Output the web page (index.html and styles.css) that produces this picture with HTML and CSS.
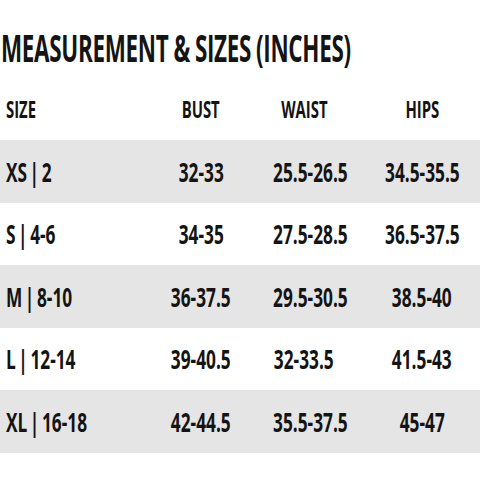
FILE: index.html
```html
<!DOCTYPE html>
<html>
<head>
<meta charset="utf-8">
<link rel="stylesheet" href="styles.css">
</head>
<body>
<div class="chart">
  <h1 class="title"><span class="sq">MEASUREMENT &amp; SIZES (INCHES)</span></h1>
  <div class="row head">
    <div class="cell size"><span class="sq">SIZE</span></div>
    <div class="cell"><span class="sq">BUST</span></div>
    <div class="cell"><span class="sq">WAIST</span></div>
    <div class="cell hips"><span class="sq">HIPS</span></div>
  </div>
  <div class="row shade">
    <div class="cell size"><span class="sq">XS | 2</span></div>
    <div class="cell"><span class="sq">32-33</span></div>
    <div class="cell"><span class="sq">25.5-26.5</span></div>
    <div class="cell hips"><span class="sq">34.5-35.5</span></div>
  </div>
  <div class="row">
    <div class="cell size"><span class="sq">S | 4-6</span></div>
    <div class="cell"><span class="sq">34-35</span></div>
    <div class="cell"><span class="sq">27.5-28.5</span></div>
    <div class="cell hips"><span class="sq">36.5-37.5</span></div>
  </div>
  <div class="row shade">
    <div class="cell size"><span class="sq">M | 8-10</span></div>
    <div class="cell"><span class="sq">36-37.5</span></div>
    <div class="cell"><span class="sq">29.5-30.5</span></div>
    <div class="cell hips"><span class="sq">38.5-40</span></div>
  </div>
  <div class="row">
    <div class="cell size"><span class="sq">L | 12-14</span></div>
    <div class="cell"><span class="sq">39-40.5</span></div>
    <div class="cell"><span class="sq">32-33.5</span></div>
    <div class="cell hips"><span class="sq">41.5-43</span></div>
  </div>
  <div class="row shade">
    <div class="cell size"><span class="sq">XL | 16-18</span></div>
    <div class="cell"><span class="sq">42-44.5</span></div>
    <div class="cell"><span class="sq">35.5-37.5</span></div>
    <div class="cell hips"><span class="sq">45-47</span></div>
  </div>
</div>
</body>
</html>
```
FILE: styles.css
```css
html, body {
  margin: 0;
  padding: 0;
  background: #fff;
}
body {
  font-family: "Open Sans", "Liberation Sans", sans-serif;
  color: #141414;
}
.chart {
  width: 480px;
}
.title {
  margin: 0;
  height: 77px;
  box-sizing: border-box;
  padding-top: 16px;
  display: flex;
  align-items: center;
  padding-left: 1px;
  font-size: 38px;
  font-weight: 700;
  line-height: 1;
  white-space: nowrap;
}
.title .sq {
  transform: scaleX(0.59);
  transform-origin: left center;
  letter-spacing: -0.5px;
  word-spacing: -1px;
}
.sq {
  display: inline-block;
  transform: scaleX(0.64);
  transform-origin: center center;
  white-space: nowrap;
}
.row {
  display: grid;
  grid-template-columns: 150px 102px 104px 124px;
  height: 62.5px;
  align-items: center;
  font-size: 27px;
  font-weight: 700;
}
.row .sq {
  word-spacing: -3px;
}
.row.head {
  height: 63px;
  font-size: 24px;
  font-weight: 700;
}
.row.head .sq {
  transform: scaleX(0.62);
}
.row.shade {
  background: #e5e5e5;
}
.cell {
  text-align: center;
  white-space: nowrap;
}
.cell.size {
  text-align: left;
  padding-left: 6px;
}
.cell.size .sq {
  transform-origin: left center;
}
.cell.hips {
  padding-left: 8px;
}
```
